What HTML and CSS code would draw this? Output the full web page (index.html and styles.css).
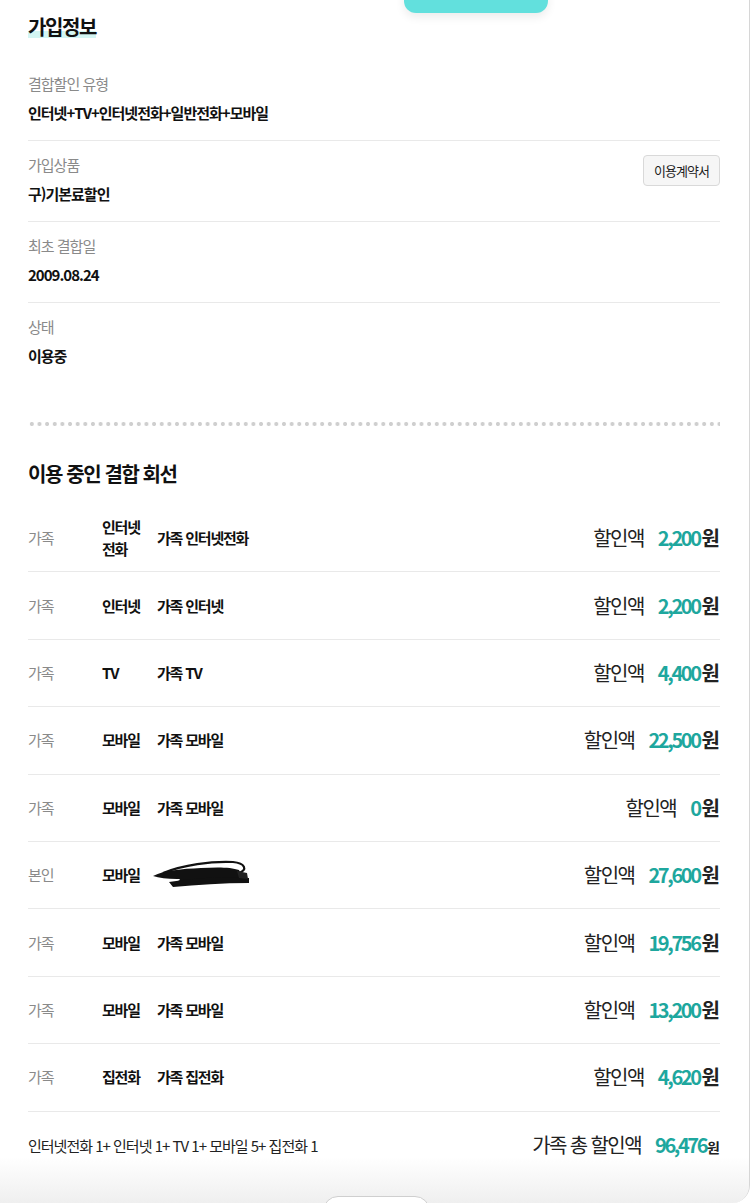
FILE: index.html
```html
<!DOCTYPE html>
<html lang="ko">
<head>
<meta charset="utf-8">
<title>가입정보</title>
<link rel="stylesheet" href="styles.css">
</head>
<body>
<div class="sheet">
  <div class="top-tab"></div>

  <section class="info">
    <h2 class="title"><span class="hl">가입정보</span></h2>
    <div class="info-list">
      <div class="info-item">
        <div class="info-text">
          <div class="label">결합할인 유형</div>
          <div class="value">인터넷+TV+인터넷전화+일반전화+모바일</div>
        </div>
      </div>
      <div class="info-item">
        <div class="info-text">
          <div class="label">가입상품</div>
          <div class="value">구)기본료할인</div>
        </div>
        <button class="contract-btn" type="button">이용계약서</button>
      </div>
      <div class="info-item">
        <div class="info-text">
          <div class="label">최초 결합일</div>
          <div class="value num">2009.08.24</div>
        </div>
      </div>
      <div class="info-item last">
        <div class="info-text">
          <div class="label">상태</div>
          <div class="value">이용중</div>
        </div>
      </div>
    </div>
  </section>

  <div class="dots"></div>

  <section class="lines">
    <h2 class="title2">이용 중인 결합 회선</h2>
    <ul class="line-list">
      <li class="line-row">
        <span class="rel">가족</span><span class="type">인터넷전화</span><span class="name">가족 인터넷전화</span>
        <span class="discount"><span class="dlabel">할인액</span><span class="amt"><b>2,200</b><span class="won">원</span></span></span>
      </li>
      <li class="line-row">
        <span class="rel">가족</span><span class="type">인터넷</span><span class="name">가족 인터넷</span>
        <span class="discount"><span class="dlabel">할인액</span><span class="amt"><b>2,200</b><span class="won">원</span></span></span>
      </li>
      <li class="line-row">
        <span class="rel">가족</span><span class="type">TV</span><span class="name">가족 TV</span>
        <span class="discount"><span class="dlabel">할인액</span><span class="amt"><b>4,400</b><span class="won">원</span></span></span>
      </li>
      <li class="line-row">
        <span class="rel">가족</span><span class="type">모바일</span><span class="name">가족 모바일</span>
        <span class="discount"><span class="dlabel">할인액</span><span class="amt"><b>22,500</b><span class="won">원</span></span></span>
      </li>
      <li class="line-row">
        <span class="rel">가족</span><span class="type">모바일</span><span class="name">가족 모바일</span>
        <span class="discount"><span class="dlabel">할인액</span><span class="amt"><b>0</b><span class="won">원</span></span></span>
      </li>
      <li class="line-row">
        <span class="rel">본인</span><span class="type">모바일</span>
        <span class="name redacted">
          <svg class="scribble" width="100" height="30" viewBox="0 0 100 30" aria-hidden="true">
            <path d="M2 16 C 14 10, 30 9, 50 8 C 66 7, 80 7, 88 10 L 92 18 C 70 21, 46 23, 26 26 L 20 24 C 28 21, 32 19, 26 19 C 16 19, 8 18, 2 16 Z" fill="#111"/>
            <path d="M12 13 C 32 5, 60 1, 82 2 C 94 3, 97 10, 88 13" stroke="#111" stroke-width="2.2" fill="none"/>
            <path d="M18 22 C 44 18, 72 16, 98 18 L 98 23 C 72 23, 46 25, 22 27 Z" fill="#111"/>
            <path d="M86 11 L 96 13 L 97 19 L 88 18 Z" fill="#222"/>
          </svg>
        </span>
        <span class="discount"><span class="dlabel">할인액</span><span class="amt"><b>27,600</b><span class="won">원</span></span></span>
      </li>
      <li class="line-row">
        <span class="rel">가족</span><span class="type">모바일</span><span class="name">가족 모바일</span>
        <span class="discount"><span class="dlabel">할인액</span><span class="amt"><b>19,756</b><span class="won">원</span></span></span>
      </li>
      <li class="line-row">
        <span class="rel">가족</span><span class="type">모바일</span><span class="name">가족 모바일</span>
        <span class="discount"><span class="dlabel">할인액</span><span class="amt"><b>13,200</b><span class="won">원</span></span></span>
      </li>
      <li class="line-row">
        <span class="rel">가족</span><span class="type">집전화</span><span class="name">가족 집전화</span>
        <span class="discount"><span class="dlabel">할인액</span><span class="amt"><b>4,620</b><span class="won">원</span></span></span>
      </li>
    </ul>
    <div class="summary">
      <span class="sum-text">인터넷전화 1+ 인터넷 1+ TV 1+ 모바일 5+ 집전화 1</span>
      <span class="discount total"><span class="dlabel">가족 총 할인액</span><span class="amt"><b>96,476</b><span class="won small">원</span></span></span>
    </div>
  </section>

  <div class="bottom-fade"><div class="bottom-btn"></div></div>
</div>
</body>
</html>
```

FILE: styles.css
```css
* { box-sizing: border-box; }

html, body {
  margin: 0;
  padding: 0;
  background: #ffffff;
}

body {
  font-family: "Noto Sans CJK KR", "Noto Sans", sans-serif;
  color: #111111;
}

.sheet {
  position: relative;
  width: 750px;
  height: 1203px;
  overflow: hidden;
  background: #ffffff;
  border-right: 1px solid #d6d6d6;
  border-bottom-right-radius: 18px;
  padding: 0 29px 0 28px;
}

.top-tab {
  position: absolute;
  left: 404px;
  top: -20px;
  width: 144px;
  height: 33px;
  background: #62e0dd;
  border-radius: 12px;
  box-shadow: 0 4px 10px rgba(0, 0, 0, 0.08);
}

/* ---------- 가입정보 ---------- */
.title {
  margin: 13px 0 0;
  font-size: 20px;
  line-height: 28px;
  font-weight: 700;
  letter-spacing: -1.4px;
}

.hl {
  background: linear-gradient(to bottom, transparent 0, transparent 64%, #d3f5f3 64%, #d3f5f3 90%, transparent 90%);
}

.info-list {
  margin-top: 19px;
}

.info-item {
  display: flex;
  justify-content: space-between;
  align-items: flex-start;
  padding: 13px 0 16px;
  border-bottom: 1px solid #e9e9e9;
}

.info-item.last {
  border-bottom: none;
}

.label {
  font-size: 15px;
  line-height: 22px;
  color: #8a8a8a;
  letter-spacing: -1px;
}

.value {
  margin-top: 7px;
  font-size: 15px;
  line-height: 22px;
  font-weight: 700;
  color: #111111;
  letter-spacing: -1px;
}

.value.num {
  letter-spacing: -1px;
}

.contract-btn {
  margin-top: 1px;
  width: 77px;
  height: 31px;
  padding: 0;
  font-family: inherit;
  font-size: 13px;
  color: #222222;
  letter-spacing: -1px;
  background: #f6f6f6;
  border: 1px solid #d9d9d9;
  border-radius: 4px;
}

/* ---------- dotted divider ---------- */
.dots {
  margin-top: 39px;
  height: 4px;
  background-image: radial-gradient(circle, #cfcfcf 1.9px, transparent 2.2px);
  background-size: 7.65px 4px;
  background-position: 0 0;
  background-repeat: repeat-x;
}

/* ---------- 이용 중인 결합 회선 ---------- */
.title2 {
  margin: 34px 0 0;
  font-size: 20px;
  line-height: 28px;
  font-weight: 700;
  letter-spacing: -1.4px;
}

.line-list {
  list-style: none;
  margin: 17px 0 0;
  padding: 0;
}

.line-row {
  display: flex;
  align-items: center;
  height: 67.4px;
  border-bottom: 1px solid #e9e9e9;
  font-size: 15px;
  line-height: 22px;
}

.rel {
  width: 74px;
  flex: none;
  color: #8a8a8a;
  letter-spacing: -1px;
}

.type {
  width: 55px;
  flex: none;
  padding-right: 8px;
  font-weight: 700;
  letter-spacing: -1.2px;
}

.name {
  flex: 1;
  font-weight: 700;
  letter-spacing: -1.2px;
}

.name.redacted {
  display: flex;
  align-items: center;
  margin-left: -6px;
}

.scribble {
  display: block;
}

.discount {
  display: flex;
  align-items: baseline;
  flex: none;
  font-size: 20px;
  line-height: 28px;
}

.dlabel {
  color: #222222;
  letter-spacing: -1.5px;
  margin-right: 14px;
}

.amt {
  font-weight: 700;
  color: #222222;
}

.amt b {
  color: #1ea79e;
  font-weight: 700;
  letter-spacing: -2.4px;
}

.won {
  letter-spacing: 0;
  margin-left: 2px;
}

.summary {
  display: flex;
  align-items: center;
  justify-content: space-between;
  height: 68px;
}

.sum-text {
  font-size: 15px;
  line-height: 22px;
  color: #222222;
  letter-spacing: -1px;
}

.total .dlabel {
  letter-spacing: -1.6px;
  margin-right: 14px;
}

.won.small {
  font-size: 14px;
  font-weight: 700;
  margin-left: 1px;
}

/* ---------- bottom overlay ---------- */
.bottom-fade {
  position: absolute;
  left: 0;
  right: 0;
  bottom: 0;
  height: 46px;
  background: linear-gradient(to bottom, rgba(255, 255, 255, 0), #efefef);
}

.bottom-btn {
  position: absolute;
  left: 323px;
  top: 39px;
  width: 107px;
  height: 30px;
  background: #ffffff;
  border: 1px solid #cfcfcf;
  border-radius: 15px;
}
```
